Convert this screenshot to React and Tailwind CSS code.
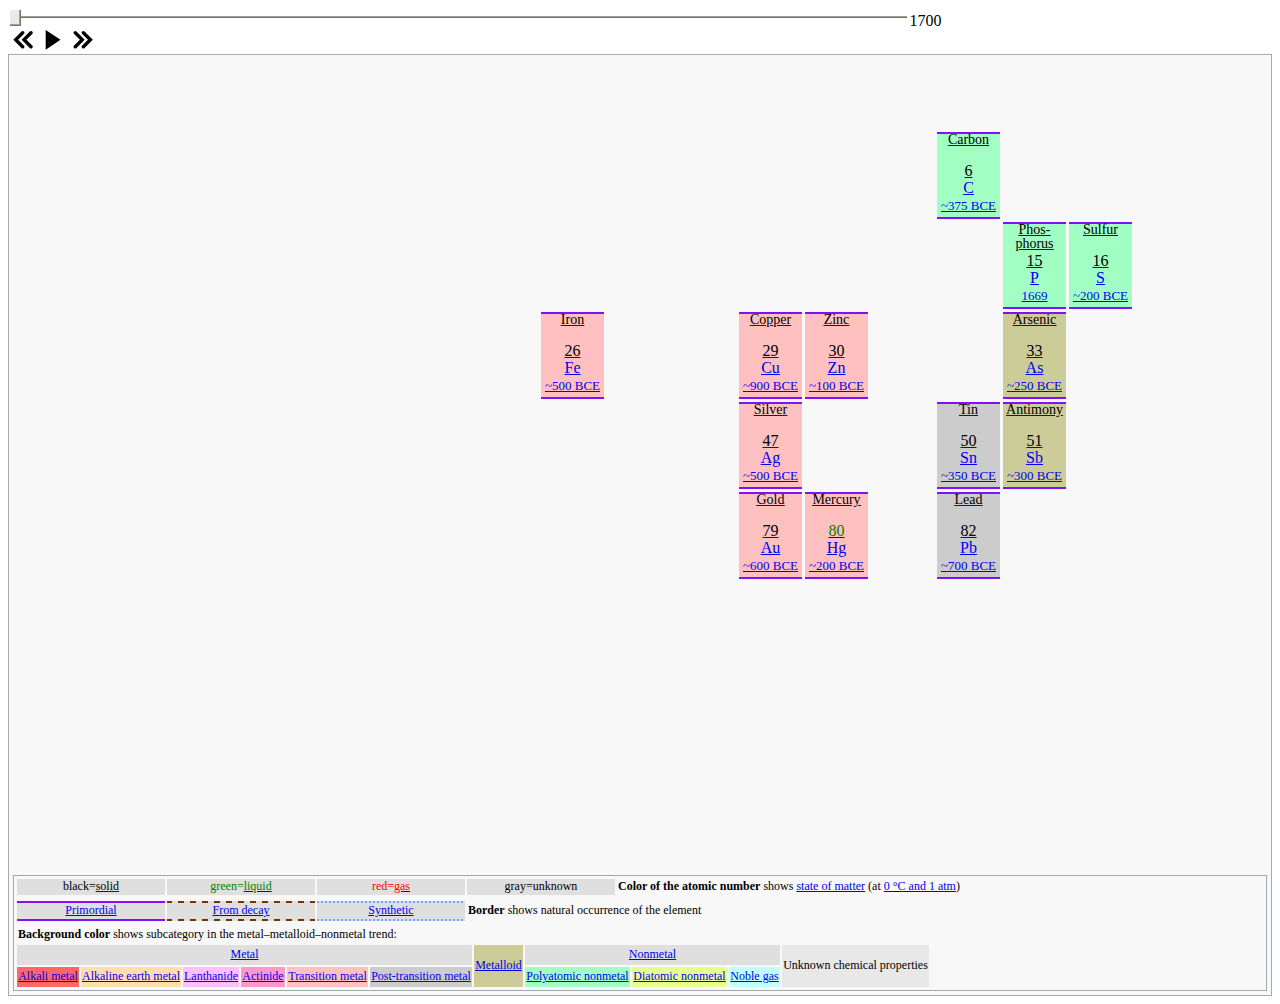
import { useState } from "react";

const ELEMENTS = [
  { name: ["Carbon"], number: 6, symbol: "C", date: "~375 BCE", bg: "bg-[#a1ffc3]", place: "col-start-15 row-start-1" },
  { name: ["Phos-", "phorus"], number: 15, symbol: "P", date: "1669", bg: "bg-[#a1ffc3]", place: "col-start-16 row-start-2" },
  { name: ["Sulfur"], number: 16, symbol: "S", date: "~200 BCE", bg: "bg-[#a1ffc3]", place: "col-start-17 row-start-2" },
  { name: ["Iron"], number: 26, symbol: "Fe", date: "~500 BCE", bg: "bg-[#ffc0c0]", place: "col-start-9 row-start-3" },
  { name: ["Copper"], number: 29, symbol: "Cu", date: "~900 BCE", bg: "bg-[#ffc0c0]", place: "col-start-12 row-start-3" },
  { name: ["Zinc"], number: 30, symbol: "Zn", date: "~100 BCE", bg: "bg-[#ffc0c0]", place: "col-start-13 row-start-3" },
  { name: ["Arsenic"], number: 33, symbol: "As", date: "~250 BCE", bg: "bg-[#cccc99]", place: "col-start-16 row-start-3" },
  { name: ["Silver"], number: 47, symbol: "Ag", date: "~500 BCE", bg: "bg-[#ffc0c0]", place: "col-start-12 row-start-4" },
  { name: ["Tin"], number: 50, symbol: "Sn", date: "~350 BCE", bg: "bg-[#cccccc]", place: "col-start-15 row-start-4" },
  { name: ["Antimony"], number: 51, symbol: "Sb", date: "~300 BCE", bg: "bg-[#cccc99]", place: "col-start-16 row-start-4" },
  { name: ["Gold"], number: 79, symbol: "Au", date: "~600 BCE", bg: "bg-[#ffc0c0]", place: "col-start-12 row-start-5" },
  { name: ["Mercury"], number: 80, symbol: "Hg", date: "~200 BCE", bg: "bg-[#ffc0c0]", place: "col-start-13 row-start-5", liquid: true },
  { name: ["Lead"], number: 82, symbol: "Pb", date: "~700 BCE", bg: "bg-[#cccccc]", place: "col-start-15 row-start-5" },
];

function Link({ children, className = "" }) {
  return (
    <a href="#" className={`text-[#0000ee] underline decoration-[#0000ee] ${className}`}>
      {children}
    </a>
  );
}

function ElementCell({ element }) {
  return (
    <div className={`mr-[3px] border-y-2 border-[#8010ff] text-center whitespace-nowrap ${element.bg} ${element.place}`}>
      <div className="-mt-px h-7 text-[14px] leading-[14px]">
        <Link>
          {element.name.map((part) => (
            <span key={part} className="block text-black underline decoration-[#0000ee]">
              {part}
            </span>
          ))}
        </Link>
      </div>
      <div className="mt-px text-[16px] leading-[17px]">
        <Link>
          <span className={element.liquid ? "text-[#008000]" : "text-black"}>{element.number}</span>
        </Link>
      </div>
      <div className="text-[16px] leading-[17px]">
        <Link>{element.symbol}</Link>
      </div>
      <div className="text-[13px] leading-5">
        <Link>{element.date}</Link>
      </div>
    </div>
  );
}

function Controls() {
  const [year, setYear] = useState(1700);
  return (
    <>
      <div className="flex h-[22px]">
        <input
          type="range"
          aria-label="Year"
          min="1700"
          max="2020"
          value={year}
          onChange={(e) => setYear(Number(e.target.value))}
          className="ml-0.5 h-4 w-[71%] mt-px appearance-none bg-transparent [&::-webkit-slider-runnable-track]:h-0.5 [&::-webkit-slider-runnable-track]:border-t [&::-webkit-slider-runnable-track]:border-[#a0a098] [&::-webkit-slider-runnable-track]:bg-[#73736b] [&::-webkit-slider-thumb]:-mt-[7px] [&::-webkit-slider-thumb]:h-4 [&::-webkit-slider-thumb]:w-[11px] [&::-webkit-slider-thumb]:appearance-none [&::-webkit-slider-thumb]:border-r [&::-webkit-slider-thumb]:border-b [&::-webkit-slider-thumb]:border-[#73736b] [&::-webkit-slider-thumb]:bg-[#ebeae4] [&::-webkit-slider-thumb]:shadow-[inset_-1px_-1px_0_#a5a59d]"
        />
        <output className="ml-0.5 mt-0.5 text-[16px] leading-[22px]">{year}</output>
      </div>
      <div className="mb-1 flex h-5 items-center gap-2.5 pl-[5px]">
        <button type="button" aria-label="Step back">
          <svg width="20" height="20" viewBox="0 0 20 20" fill="none" stroke="#000" strokeWidth="3.4" strokeLinecap="round" className="block">
            <path d="M9.700 2.700 2.700 9.700l7 7M18 2.700 11 9.700l7 7" />
          </svg>
        </button>
        <button type="button" aria-label="Play">
          <svg width="20" height="20" viewBox="0 0 20 20" className="block">
            <path d="M2.700 0v19.700L17.500 9.850z" fill="#000" />
          </svg>
        </button>
        <button type="button" aria-label="Step forward">
          <svg width="20" height="20" viewBox="0 0 20 20" fill="none" stroke="#000" strokeWidth="3.4" strokeLinecap="round" className="block">
            <path d="M2.300 2.700l7 7-7 7M10.400 2.700l7 7-7 7" />
          </svg>
        </button>
      </div>
    </>
  );
}

function Legend() {
  return (
    <div className="mx-1 mb-1 border border-[#a2a9b1] p-px text-[12px] leading-[14px] whitespace-nowrap">
      <table className="border-separate border-spacing-0.5 text-center">
        <tbody>
          <tr>
            <td className="w-[148px] bg-[#dfdfdf] px-px pb-0.5">
              black=<Link><span className="text-black">solid</span></Link>
            </td>
            <td className="w-[148px] bg-[#dfdfdf] px-px pb-0.5 text-[#008000]">
              green=<Link><span className="text-[#008000]">liquid</span></Link>
            </td>
            <td className="w-[148px] bg-[#dfdfdf] px-px pb-0.5 text-[#ff0000]">
              red=<Link><span className="text-[#ff0000]">gas</span></Link>
            </td>
            <td className="w-[148px] bg-[#dfdfdf] px-px pb-0.5">gray=unknown</td>
            <td className="px-px pb-0.5 text-left">
              <b>Color of the atomic number</b> shows <Link>state of matter</Link> (at <Link>0 °C and 1 atm</Link>)
            </td>
          </tr>
        </tbody>
      </table>
      <table className="mt-0.5 border-separate border-spacing-0.5 text-center">
        <tbody>
          <tr className="h-5">
            <td className="w-[148px] border-y-2 border-[#8010ff] bg-[#dfdfdf] px-px pb-0.5"><Link>Primordial</Link></td>
            <td className="w-[148px] bg-[linear-gradient(transparent_2px,#dfdfdf_2px_18px,transparent_18px),repeating-linear-gradient(90deg,#773300_0_5px,#dfdfdf_5px_11px,#773300_11px_12px)] px-px pt-0.5 pb-1"><Link>From decay</Link></td>
            <td className="w-[148px] bg-[linear-gradient(transparent_2px,#dfdfdf_2px_18px,transparent_18px),repeating-linear-gradient(90deg,#66aaff_0_2px,#dfdfdf_2px_4px)] px-px pt-0.5 pb-1"><Link>Synthetic</Link></td>
            <td className="px-px pb-0.5 text-left"><b>Border</b> shows natural occurrence of the element</td>
          </tr>
        </tbody>
      </table>
      <p className="h-5 pl-[3px] leading-[22px]">
        <b>Background color</b> shows subcategory in the metal–metalloid–nonmetal trend:
      </p>
      <table className="border-separate border-spacing-0.5 text-center">
        <tbody>
          <tr className="h-5">
            <td colSpan="6" className="bg-[#dfdfdf] px-px pb-0.5"><Link>Metal</Link></td>
            <td rowSpan="2" className="min-w-[49px] bg-[#cccc99] px-px pb-0.5"><Link>Metalloid</Link></td>
            <td colSpan="3" className="bg-[#dfdfdf] px-px pb-0.5"><Link>Nonmetal</Link></td>
            <td rowSpan="2" className="min-w-[147px] bg-[#e8e8e8] px-px pb-0.5">Unknown chemical properties</td>
          </tr>
          <tr className="h-5">
            <td className="min-w-[62px] bg-[#ff6666] px-px pb-0.5"><Link>Alkali metal</Link></td>
            <td className="min-w-[100px] bg-[#ffdead] px-px pb-0.5"><Link>Alkaline earth metal</Link></td>
            <td className="min-w-[56px] bg-[#ffbfff] px-px pb-0.5"><Link>Lanthanide</Link></td>
            <td className="min-w-[44px] bg-[#ff99cc] px-px pb-0.5"><Link>Actinide</Link></td>
            <td className="min-w-[81px] bg-[#ffc0c0] px-px pb-0.5"><Link>Transition metal</Link></td>
            <td className="min-w-[102px] bg-[#cccccc] px-px pb-0.5"><Link>Post-transition metal</Link></td>
            <td className="min-w-[105px] bg-[#a1ffc3] px-px pb-0.5"><Link>Polyatomic nonmetal</Link></td>
            <td className="min-w-[95px] bg-[#e7ff8f] px-px pb-0.5"><Link>Diatomic nonmetal</Link></td>
            <td className="min-w-[51px] bg-[#c0ffff] px-px pb-0.5"><Link>Noble gas</Link></td>
          </tr>
        </tbody>
      </table>
    </div>
  );
}

export default function App() {
  return (
    <div className="bg-white p-2 font-['Liberation_Serif',serif] text-black">
      <Controls />
      <main className="border border-[#aaaaaa] bg-[#f8f8f8]">
        <div className="mx-1 grid auto-rows-[87px] grid-cols-[repeat(19,minmax(0,1fr))] gap-y-[3px] pt-[77px] pb-[296px]">
          {ELEMENTS.map((element) => (
            <ElementCell key={element.number} element={element} />
          ))}
        </div>
        <Legend />
      </main>
    </div>
  );
}
